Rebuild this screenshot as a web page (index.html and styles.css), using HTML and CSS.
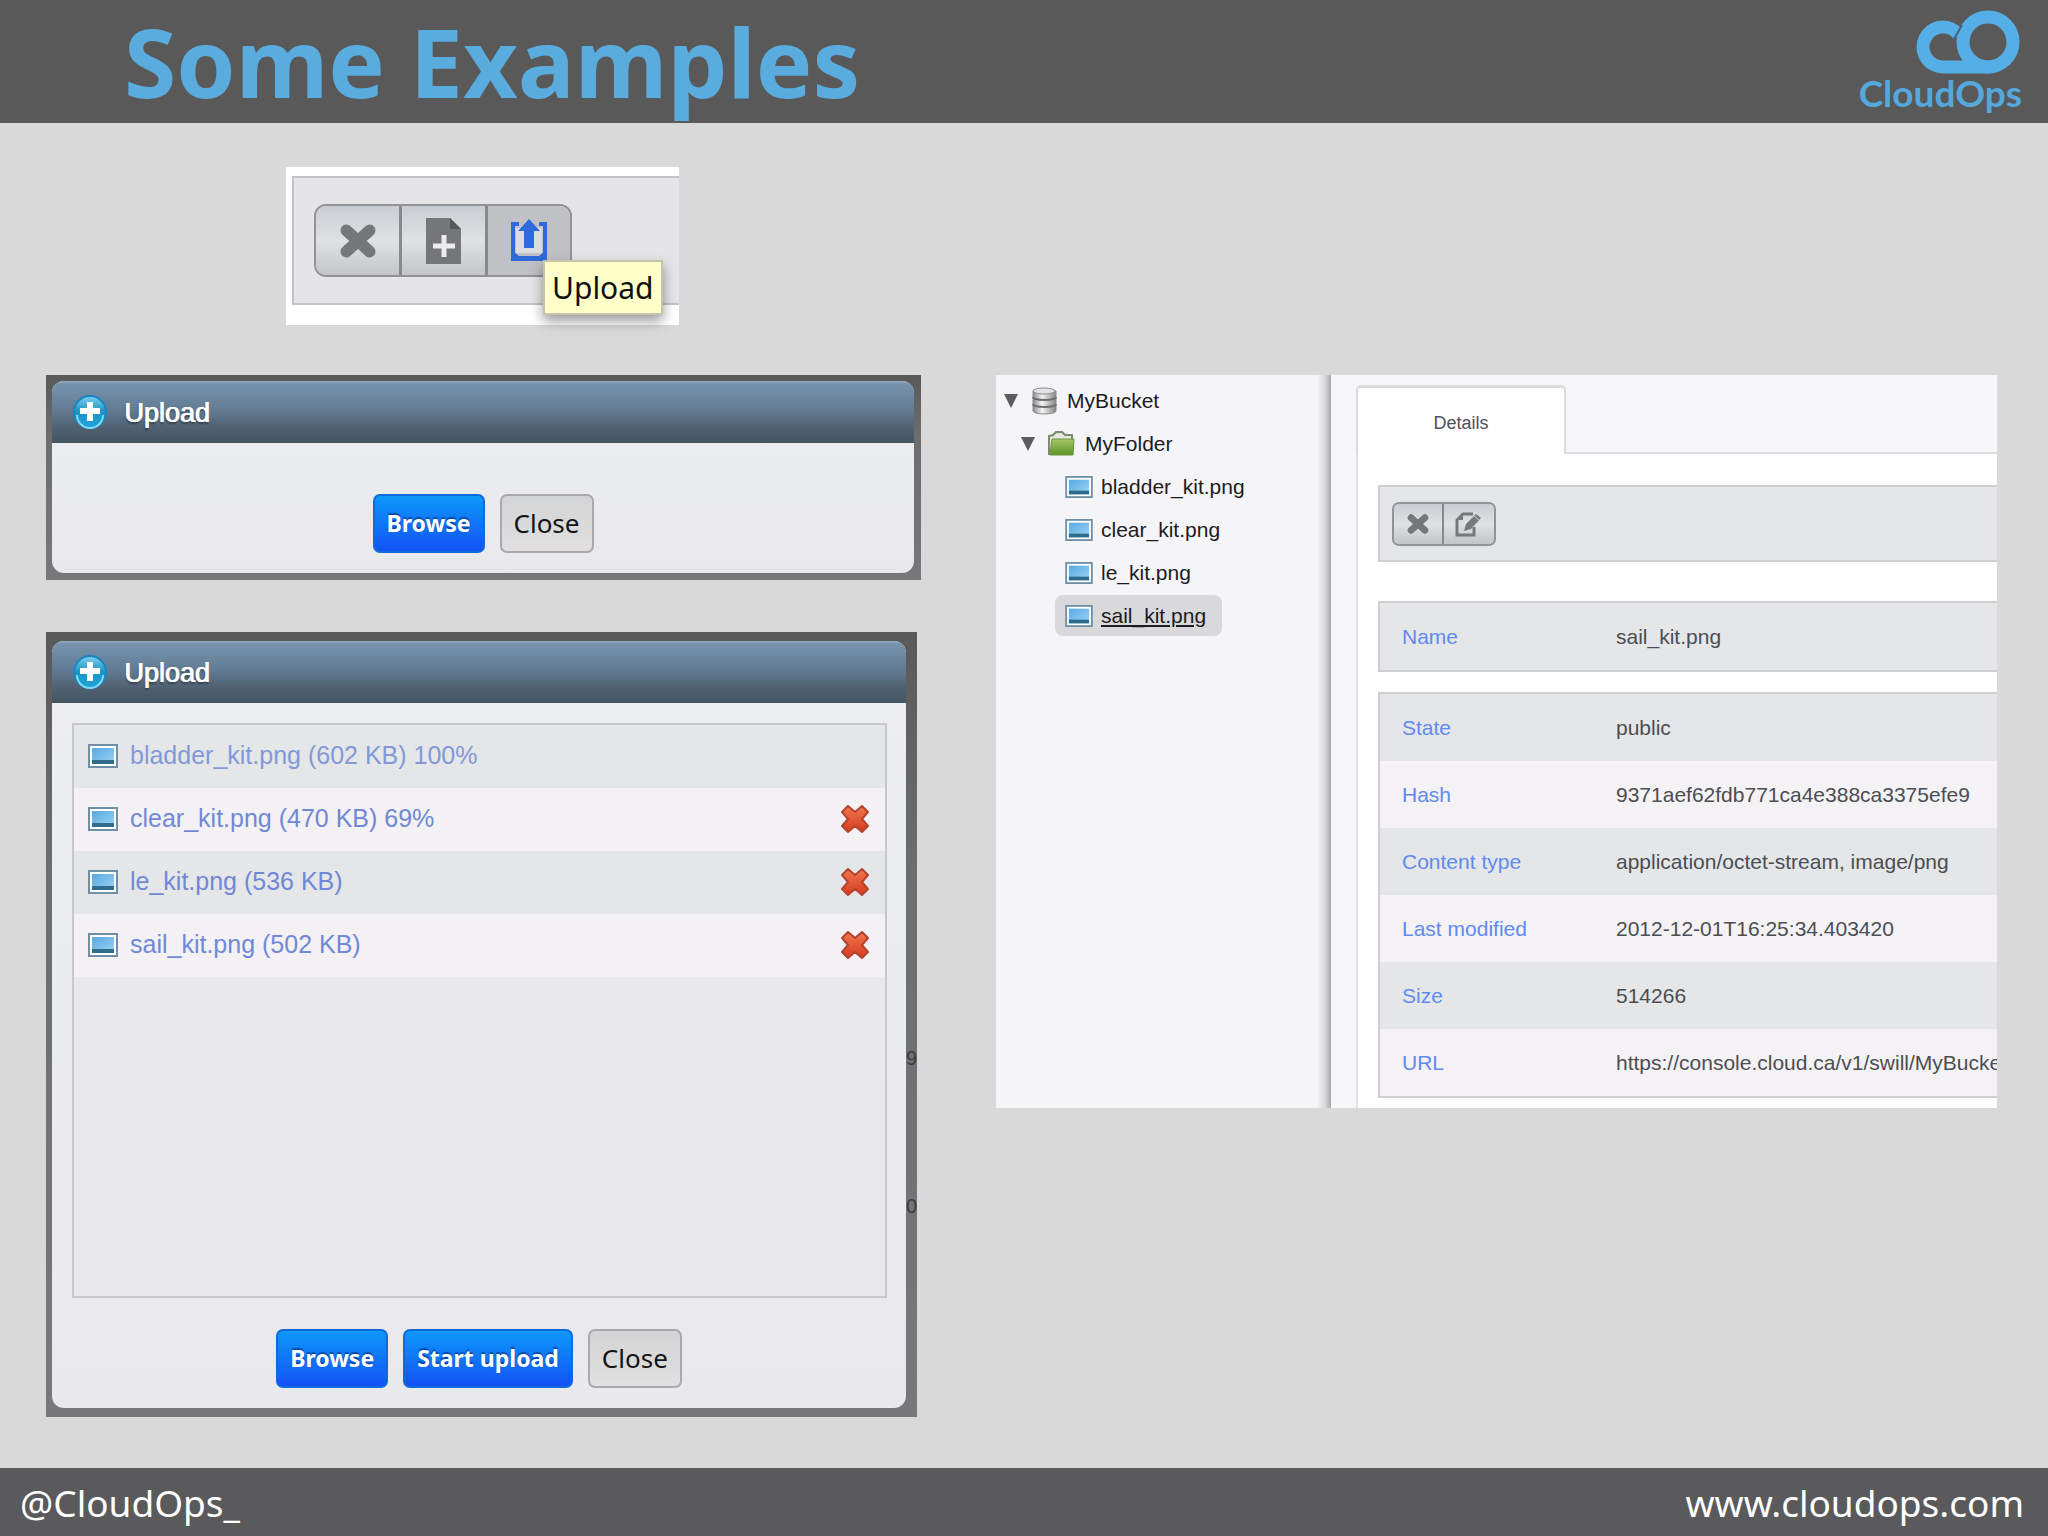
FILE: index.html
```html
<!DOCTYPE html>
<html lang="en">
<head>
  <meta charset="UTF-8" />
  <meta name="viewport" content="width=device-width, initial-scale=1.0"/>
  <title>Some Examples | CloudOps</title>

  <link rel="stylesheet" href="styles.css">
</head>
<body>
  <!-- Shared icons -->
  <svg class="sprite" aria-hidden="true">
    <defs>
      <linearGradient id="sky" x1="0" y1="0" x2="1" y2="1">
        <stop offset="0" stop-color="#58a9e2"/>
        <stop offset="1" stop-color="#9bd3f3"/>
      </linearGradient>
      <linearGradient id="red" x1="0" y1="0" x2="0" y2="1">
        <stop offset="0" stop-color="#ee7a50"/>
        <stop offset="1" stop-color="#d8391c"/>
      </linearGradient>
      <linearGradient id="aqua" x1="0" y1="0" x2="0" y2="1">
        <stop offset="0" stop-color="#7fd0ee"/>
        <stop offset="0.5" stop-color="#1a93c4"/>
        <stop offset="1" stop-color="#20a6dc"/>
      </linearGradient>
      <linearGradient id="green" x1="0" y1="0" x2="0" y2="1">
        <stop offset="0" stop-color="#a5c868"/>
        <stop offset="1" stop-color="#5f9428"/>
      </linearGradient>
      <linearGradient id="steel" x1="0" y1="0" x2="1" y2="0">
        <stop offset="0" stop-color="#8a8a8c"/>
        <stop offset="0.4" stop-color="#f4f4f4"/>
        <stop offset="1" stop-color="#858587"/>
      </linearGradient>
    </defs>
    <symbol id="icon-image" viewBox="0 0 30 24">
      <rect x="1" y="1" width="28" height="22" fill="#fff" stroke="#6f8fa6" stroke-width="2"/>
      <rect x="4" y="4" width="22" height="16" fill="url(#sky)"/>
      <rect x="4" y="16" width="22" height="4" fill="#2f6c8c"/>
    </symbol>
    <symbol id="icon-plus" viewBox="0 0 36 36">
      <circle cx="18" cy="17" r="16" fill="url(#aqua)" stroke="#1786c4" stroke-width="2"/>
      <path d="M5 20a13 13 0 0 0 26 0" fill="none" stroke="#7fdcf5" stroke-width="2"/>
      <path d="M18 7v19M8 16h20" stroke="#fff" stroke-width="6"/>
    </symbol>
    <symbol id="icon-cross" viewBox="0 0 34 32">
      <path d="M6 6l22 20M28 6L6 26" stroke="currentColor" stroke-width="11" stroke-linecap="round"/>
    </symbol>
    <symbol id="icon-remove" viewBox="0 0 28 28">
      <path d="M7 1l7 6 7-6 6 6-6 7 6 7-6 6-7-6-7 6-6-6 6-7-6-7z" fill="url(#red)" stroke="#b5432e" stroke-width="2" stroke-linejoin="round"/>
    </symbol>
  </svg>

  <!-- Header -->
  <header class="top-bar">
    <h1>Some Examples</h1>
    <a class="logo" href="#">
      <svg width="112" height="68" viewBox="0 0 112 68">
        <path d="M49 27A20 20 0 1 0 34 59H80" fill="none" stroke="#55aee5" stroke-width="13"/>
        <circle cx="78" cy="34" r="25" fill="none" stroke="#55aee5" stroke-width="13"/>
        <path d="M52 17L44 31" stroke="#40627a" stroke-width="2"/>
      </svg>
      <span>CloudOps</span>
    </a>
  </header>

  <main class="slide">
    <!-- Toolbar with tooltip -->
    <section class="toolbar-shot">
      <div class="toolbar-box">
        <div class="icon-group">
          <button type="button" aria-label="Delete">
            <svg width="36" height="34"><use href="#icon-cross"/></svg>
          </button>
          <button type="button" aria-label="New folder">
            <svg width="36" height="48" viewBox="0 0 36 48">
              <path d="M0 1h24l11 11v35H0z" fill="#757678"/>
              <path d="M24 1v11h11z" fill="#54565a"/>
              <path d="M18 18v22M7 29h22" stroke="#ececee" stroke-width="5"/>
            </svg>
          </button>
          <button type="button" class="pressed" aria-label="Upload">
            <svg width="38" height="44" viewBox="0 0 38 44">
              <path d="M6 9h26v25H6z" fill="#dcdddf"/>
              <path d="M9 5H3v35h32V5h-6" fill="none" stroke="#2f6ad9" stroke-width="4"/>
              <path d="M3 32l6 5h20l6-5v10H3z" fill="#2f6ad9"/>
              <path d="M19 0l11 12h-6v17H14V12H8z" fill="#2f6ad9"/>
            </svg>
          </button>
        </div>
        <span class="tooltip" role="tooltip">Upload</span>
      </div>
    </section>

    <div class="dialogs">
      <!-- Empty upload dialog -->
      <section class="backdrop">
        <div class="dialog">
          <h2><svg width="36" height="36"><use href="#icon-plus"/></svg>Upload</h2>
          <div class="actions">
            <button type="button" class="btn primary">Browse</button>
            <button type="button" class="btn">Close</button>
          </div>
        </div>
      </section>

      <!-- Upload dialog with queue -->
      <section class="backdrop queue">
        <div class="dialog">
          <h2><svg width="36" height="36"><use href="#icon-plus"/></svg>Upload</h2>
          <ul class="file-list">
            <li class="done">
              <svg width="30" height="24"><use href="#icon-image"/></svg>
              <span>bladder_kit.png (602 KB) 100%</span>
            </li>
            <li>
              <svg width="30" height="24"><use href="#icon-image"/></svg>
              <span>clear_kit.png (470 KB) 69%</span>
              <button type="button" aria-label="Remove clear_kit.png"><svg width="28" height="28"><use href="#icon-remove"/></svg></button>
            </li>
            <li>
              <svg width="30" height="24"><use href="#icon-image"/></svg>
              <span>le_kit.png (536 KB)</span>
              <button type="button" aria-label="Remove le_kit.png"><svg width="28" height="28"><use href="#icon-remove"/></svg></button>
            </li>
            <li>
              <svg width="30" height="24"><use href="#icon-image"/></svg>
              <span>sail_kit.png (502 KB)</span>
              <button type="button" aria-label="Remove sail_kit.png"><svg width="28" height="28"><use href="#icon-remove"/></svg></button>
            </li>
          </ul>
          <div class="actions">
            <button type="button" class="btn primary">Browse</button>
            <button type="button" class="btn primary">Start upload</button>
            <button type="button" class="btn">Close</button>
          </div>
        </div>
        <!-- Page text showing behind the dialog -->
        <div class="behind">
          <span>9</span>
          <span>0</span>
        </div>
      </section>
    </div>

    <!-- Object browser -->
    <section class="browser">
      <nav class="tree">
        <ul>
          <li class="level-1">
            <svg width="14" height="14" viewBox="0 0 14 14"><path d="M0 0h14L7 14z" fill="#5c5c5e"/></svg>
            <svg class="bucket" width="25" height="28" viewBox="0 0 25 28">
              <path d="M1 4v20c0 4 23 4 23 0V4z" fill="url(#steel)" stroke="#8b8b8d"/>
              <ellipse cx="12" cy="4" rx="11" ry="3" fill="#e4e4e6" stroke="#8b8b8d"/>
              <path d="M1 10c0 4 23 4 23 0M1 17c0 4 23 4 23 0" fill="none" stroke="#6d6d70" stroke-width="2"/>
            </svg>
            <a href="#">MyBucket</a>
          </li>
          <li class="level-2">
            <svg width="14" height="14" viewBox="0 0 14 14"><path d="M0 0h14L7 14z" fill="#5c5c5e"/></svg>
            <svg class="folder" width="27" height="25" viewBox="0 0 27 25">
              <path d="M1 24V5l4-1 3-3h6l3 3h7v5" fill="#e6e8e2" stroke="#7a8a6c" stroke-width="2"/>
              <path d="M4 8h22l-1 16H2z" fill="url(#green)" stroke="#6c9442"/>
            </svg>
            <a href="#">MyFolder</a>
          </li>
          <li class="level-3"><a href="#"><svg width="28" height="22"><use href="#icon-image"/></svg><span>bladder_kit.png</span></a></li>
          <li class="level-3"><a href="#"><svg width="28" height="22"><use href="#icon-image"/></svg><span>clear_kit.png</span></a></li>
          <li class="level-3"><a href="#"><svg width="28" height="22"><use href="#icon-image"/></svg><span>le_kit.png</span></a></li>
          <li class="level-3"><a class="selected" href="#"><svg width="28" height="22"><use href="#icon-image"/></svg><span>sail_kit.png</span></a></li>
        </ul>
      </nav>

      <div class="details">
        <div class="tabs">
          <button type="button" class="tab">Details</button>
        </div>
        <div class="tab-body">
          <div class="details-toolbar">
            <div class="icon-group small">
              <button type="button" aria-label="Delete">
                <svg width="22" height="20"><use href="#icon-cross"/></svg>
              </button>
              <button type="button" aria-label="Edit">
                <svg width="28" height="26" viewBox="0 0 28 26">
                  <path d="M18 3H8L2 9v15h17v-8" fill="none" stroke="#77797b" stroke-width="3"/>
                  <path d="M8 3v6H2z" fill="#77797b"/>
                  <path d="M9 20l2-7L21 3l5 4-10 11z" fill="#77797b"/>
                  <path d="M19 5l5 4" stroke="#c9cbcd"/>
                </svg>
              </button>
            </div>
          </div>
          <table class="name-table">
            <tr><th scope="row">Name</th><td>sail_kit.png</td></tr>
          </table>
          <table>
            <tr><th scope="row">State</th><td>public</td></tr>
            <tr><th scope="row">Hash</th><td>9371aef62fdb771ca4e388ca3375efe9</td></tr>
            <tr><th scope="row">Content type</th><td>application/octet-stream, image/png</td></tr>
            <tr><th scope="row">Last modified</th><td>2012-12-01T16:25:34.403420</td></tr>
            <tr><th scope="row">Size</th><td>514266</td></tr>
            <tr><th scope="row">URL</th><td>https://console.cloud.ca/v1/swill/MyBucke</td></tr>
          </table>
        </div>
      </div>
    </section>
  </main>

  <!-- Footer -->
  <footer class="bottom-bar">
    <span>@CloudOps_</span>
    <a href="#">www.cloudops.com</a>
  </footer>
</body>
</html>
```
FILE: styles.css
```css
* {
  box-sizing: border-box;
  margin: 0;
  padding: 0;
}

body {
  display: flex;
  flex-direction: column;
  min-height: 100vh;
  font-family: "Liberation Sans", Arial, sans-serif;
  background-color: #d9d9da;
}

svg {
  display: block;
  flex: none;
}

button {
  font: inherit;
  border: none;
  background: none;
  cursor: pointer;
}

a {
  color: inherit;
  text-decoration: none;
}

ul {
  list-style: none;
}

.sprite {
  position: absolute;
  width: 0;
  height: 0;
}

/* Header and footer */
.top-bar {
  display: flex;
  justify-content: space-between;
  height: 123px;
  padding: 0 26px 0 124px;
  background: #595959;
}

.top-bar h1 {
  font-family: "Noto Sans", sans-serif;
  font-size: 95px;
  font-weight: bold;
  line-height: 122px;
  color: #5aacdf;
}

.logo {
  display: flex;
  flex-direction: column;
  align-items: flex-end;
  padding-top: 8px;
  font-family: Lato, sans-serif;
  font-size: 37px;
  font-weight: bold;
  line-height: 34px;
  color: #55a8dc;
}

.bottom-bar {
  display: flex;
  justify-content: space-between;
  align-items: center;
  height: 69px;
  padding: 0 24px 0 20px;
  background: #5a595b;
  color: #fff;
  font-family: "Noto Sans", sans-serif;
  font-size: 37px;
  line-height: 48px;
}

/* Slide grid */
.slide {
  flex: 1;
  display: grid;
  grid-template-columns: 875fr 1001fr;
  grid-template-rows: auto 1fr;
  gap: 50px 75px;
  align-items: start;
  padding: 44px 51px 51px 46px;
}

/* Toolbar */
.toolbar-shot {
  grid-column: 1 / -1;
  width: 393px;
  margin-left: 240px;
  padding: 9px 0 20px 6px;
  background: #fff;
}

.toolbar-box {
  position: relative;
  padding: 26px 20px;
  background: #e5e5e7;
  border: 2px solid #c4c4c7;
  border-right: none;
}

.icon-group {
  display: inline-flex;
  vertical-align: top;
  border: 2px solid #929396;
  border-radius: 12px;
  overflow: hidden;
}

.icon-group button {
  display: flex;
  align-items: center;
  justify-content: center;
  width: 86px;
  height: 69px;
  color: #75777a;
  background: linear-gradient(#c9cdd1, #dfe1e4 50%, #c3c5c8);
  border-right: 3px solid #88898c;
}

.icon-group button:last-child {
  border-right: none;
}

.icon-group .pressed {
  width: 82px;
  background: #bfc1c5;
}

.tooltip {
  position: absolute;
  top: 82px;
  left: 249px;
  padding: 0 7px;
  border: 2px solid #c3c3ae;
  background: #ffffc8;
  box-shadow: 0 6px 12px rgba(0, 0, 0, 0.4);
  font-family: "Noto Sans", sans-serif;
  font-size: 30px;
  line-height: 51px;
  color: #111;
}

/* Dialogs */
.dialogs {
  display: flex;
  flex-direction: column;
  gap: 52px;
}

.backdrop {
  position: relative;
  padding: 6px 7px 7px 6px;
  background: linear-gradient(#59595a, #6c6d6f 30%, #78787a);
}

.backdrop.queue {
  margin-right: 4px;
  padding: 9px 11px 9px 6px;
}

.behind {
  position: absolute;
  top: 414px;
  right: 0;
  display: flex;
  flex-direction: column;
  gap: 124px;
  color: #3c3c3e;
  font-size: 20px;
  line-height: 24px;
}

.dialog {
  border-radius: 12px;
  overflow: hidden;
  background: linear-gradient(#eceef0, #e9e9eb);
}

.dialog h2 {
  display: flex;
  align-items: center;
  gap: 16px;
  height: 62px;
  padding-left: 20px;
  border-top: 2px solid #8aa3ba;
  background: linear-gradient(#7894ae, #627b93 45%, #4f6071 75%, #435561);
  color: #fff;
  font-size: 27px;
  font-weight: normal;
  text-shadow: 1px 0 0 #fff, 0 2px 2px rgba(0, 0, 0, 0.4);
}

.actions {
  display: flex;
  justify-content: center;
  gap: 15px;
  padding: 51px 0 20px;
}

.queue .actions {
  padding-top: 31px;
}

.btn {
  height: 59px;
  padding: 0 12px;
  border: 2px solid #a9a9ab;
  border-radius: 7px;
  background: linear-gradient(#d3d4d5, #e1dfe0);
  color: #141414;
  font-family: "Noto Sans", sans-serif;
  font-size: 26px;
  line-height: 51px;
}

.btn.primary {
  border-color: #0f6bdc;
  background: linear-gradient(#0d98fa, #1452f6);
  color: #fff;
  font-size: 23px;
  font-weight: bold;
  text-shadow: 0 -2px 1px rgba(0, 40, 120, 0.6);
}

/* Upload queue */
.file-list {
  height: 575px;
  margin: 20px 19px 0 20px;
  border: 2px solid #c8c8cb;
  background: #e9e8ea;
}

.file-list li {
  display: flex;
  align-items: center;
  gap: 12px;
  height: 63px;
  padding: 0 16px 2px 14px;
  font-size: 25px;
  color: #7088d6;
}

.file-list li:nth-child(odd) {
  background: #e5e6e8;
}

.file-list li:nth-child(even) {
  background: #f3f1f3;
}

.file-list .done {
  color: #8199d8;
}

.file-list button {
  margin-left: auto;
}

/* Object browser */
.browser {
  display: grid;
  grid-template-columns: 335px minmax(0, 1fr);
  background: #f7f6f9;
  overflow: hidden;
}

.tree {
  padding: 4px 0 0 8px;
  background: linear-gradient(to left, #a9a9ab, #d8d8da 6px, #f5f4f7 14px);
  font-size: 21px;
  color: #1c1c1e;
}

.tree li {
  display: flex;
  align-items: center;
  height: 43px;
}

.level-2 {
  padding-left: 17px;
}

.level-3 {
  padding-left: 51px;
}

.bucket {
  margin: 0 10px 0 14px;
}

.folder {
  margin: 0 10px 0 13px;
}

.level-3 a {
  display: flex;
  align-items: center;
  gap: 8px;
  height: 41px;
  padding: 0 16px 0 10px;
  border-radius: 8px;
}

.tree .selected {
  background: #d9d8da;
  text-decoration: underline;
}

/* Details pane */
.details {
  padding: 10px 0 0 25px;
}

.tabs {
  height: 69px;
  border-bottom: 2px solid #dddcdf;
}

.tab {
  width: 210px;
  height: 69px;
  padding-top: 4px;
  border: 2px solid #dbdadd;
  border-top-width: 3px;
  border-bottom: none;
  border-radius: 5px 5px 0 0;
  background: #fff;
  font-size: 18px;
  color: #505257;
}

.tab-body {
  padding: 31px 0 10px 20px;
  border-left: 2px solid #e2e1e4;
  background: #fff;
}

.details-toolbar {
  height: 77px;
  margin-bottom: 39px;
  padding: 15px 12px;
  background: #e5e6e8;
  border: 2px solid #cfced1;
  border-right: none;
}

.icon-group.small {
  border-radius: 7px;
}

.icon-group.small button {
  width: 50px;
  height: 40px;
  border-right-width: 2px;
}

.icon-group.small button:last-child {
  border-right: none;
}

.details table {
  width: 100%;
  table-layout: fixed;
  border-spacing: 0;
  border: 2px solid #cfced1;
  border-right: none;
  font-size: 21px;
}

.details .name-table {
  margin-bottom: 20px;
}

.details th {
  width: 236px;
  height: 67px;
  padding-left: 22px;
  text-align: left;
  font-weight: normal;
  color: #5f8af0;
}

.details td {
  color: #4b4e53;
  white-space: nowrap;
}

.details tr:nth-child(odd) {
  background: #e5e6e8;
}

.details tr:nth-child(even) {
  background: #f4f2f4;
}
```
